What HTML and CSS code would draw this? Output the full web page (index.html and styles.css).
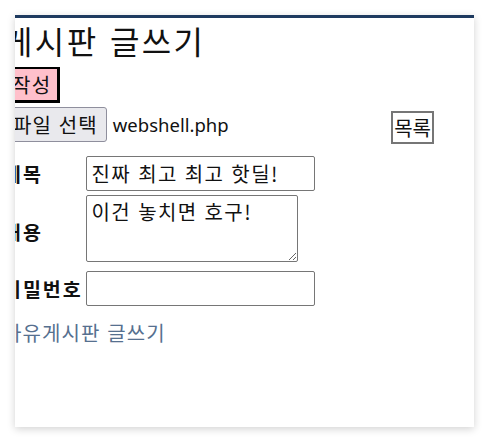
FILE: index.html
```
<!DOCTYPE html>
<html lang="ko">
<head>
<meta charset="utf-8">
<link rel="stylesheet" href="styles.css">
</head>
<body>
<div class="card">
  <div class="inner">
    <h1 class="title">게시판 글쓰기</h1>
    <div class="row-write"><button class="btn-write">작성</button></div>
    <div class="row-file">
      <div class="file">
        <span class="file-btn">파일 선택</span>
        <span class="file-name">webshell.php</span>
      </div>
      <button class="btn-list">목록</button>
    </div>
    <div class="form">
      <label class="lbl">제목</label>
      <input class="field" type="text" value="진짜 최고 최고 핫딜!">
      <label class="lbl">내용</label>
      <textarea class="area">이건 놓치면 호구!</textarea>
      <label class="lbl">비밀번호</label>
      <input class="field" type="password">
    </div>
    <a class="back" href="#">자유게시판 글쓰기</a>
  </div>
</div>
</body>
</html>
```
FILE: styles.css
```
* { box-sizing: border-box; }
html, body { margin: 0; padding: 0; background: #fff; }
body {
  font-family: "Noto Sans CJK KR", "Noto Sans", sans-serif;
  color: #111;
  padding: 15px;
  letter-spacing: 0.07em;
}
.card {
  width: 459px;
  height: 412px;
  border-top: 3px solid #1e3a5f;
  background: #fff;
  box-shadow: 0 2px 8px rgba(0,0,0,0.18);
  overflow: hidden;
}
.inner {
  margin-left: -12px;
}
.title {
  font-size: 32px;
  font-weight: normal;
  margin: 0;
  line-height: 42px;
  padding-top: 1px;
  letter-spacing: 0.075em;
}
.row-write { margin-top: 5px; }
.btn-write {
  font: inherit;
  font-size: 20px;
  line-height: 26px;
  letter-spacing: 0.07em;
  background: #ffc0cb;
  color: #111;
  border-style: solid;
  border-color: #000;
  border-width: 2px 3px 3px 2px;
  padding: 2px 5px 2px 7px;
  height: 36px;
  margin-top: 1px;
}
.row-file {
  display: flex;
  align-items: flex-start;
  justify-content: space-between;
  margin-top: 4px;
  padding-right: 40px;
}
.file { display: flex; align-items: center; }
.file-btn {
  display: inline-block;
  font-size: 20px;
  line-height: 33px;
  height: 35px;
  padding: 0 8px 0 9px;
  background: #e9e9ed;
  border: 1px solid #8f8f9d;
  border-radius: 3px;
}
.file-name {
  font-size: 18.5px;
  letter-spacing: 0;
  margin-left: 6px;
  font-family: "Noto Sans", sans-serif;
}
.btn-list {
  font: inherit;
  font-size: 20px;
  line-height: 26px;
  letter-spacing: 0;
  height: 33px;
  margin-top: 4px;
  padding: 0 1px;
  background: #fff;
  color: #111;
  border: 2px solid #767676;
}
.form {
  display: grid;
  grid-template-columns: max-content max-content;
  justify-content: start;
  column-gap: 3px;
  row-gap: 4px;
  align-items: center;
  justify-items: start;
  margin-top: 12px;
}
.lbl {
  font-weight: bold;
  font-size: 19.5px;
  letter-spacing: 0.1em;
}
.field {
  font: inherit;
  font-size: 20px;
  letter-spacing: 0.07em;
  width: 229px;
  height: 35px;
  padding: 0 5px;
  border: 1px solid #767676;
  border-radius: 2px;
  color: #111;
}
.area {
  font: inherit;
  font-size: 20px;
  letter-spacing: 0.07em;
  line-height: 24px;
  width: 212px;
  height: 67px;
  padding: 4px 5px;
  border: 1px solid #767676;
  border-radius: 2px;
  margin-bottom: 5px;
  color: #111;
  resize: both;
}
.back {
  display: block;
  margin-top: 12px;
  font-size: 20px;
  color: #56708f;
  text-decoration: none;
}
```
